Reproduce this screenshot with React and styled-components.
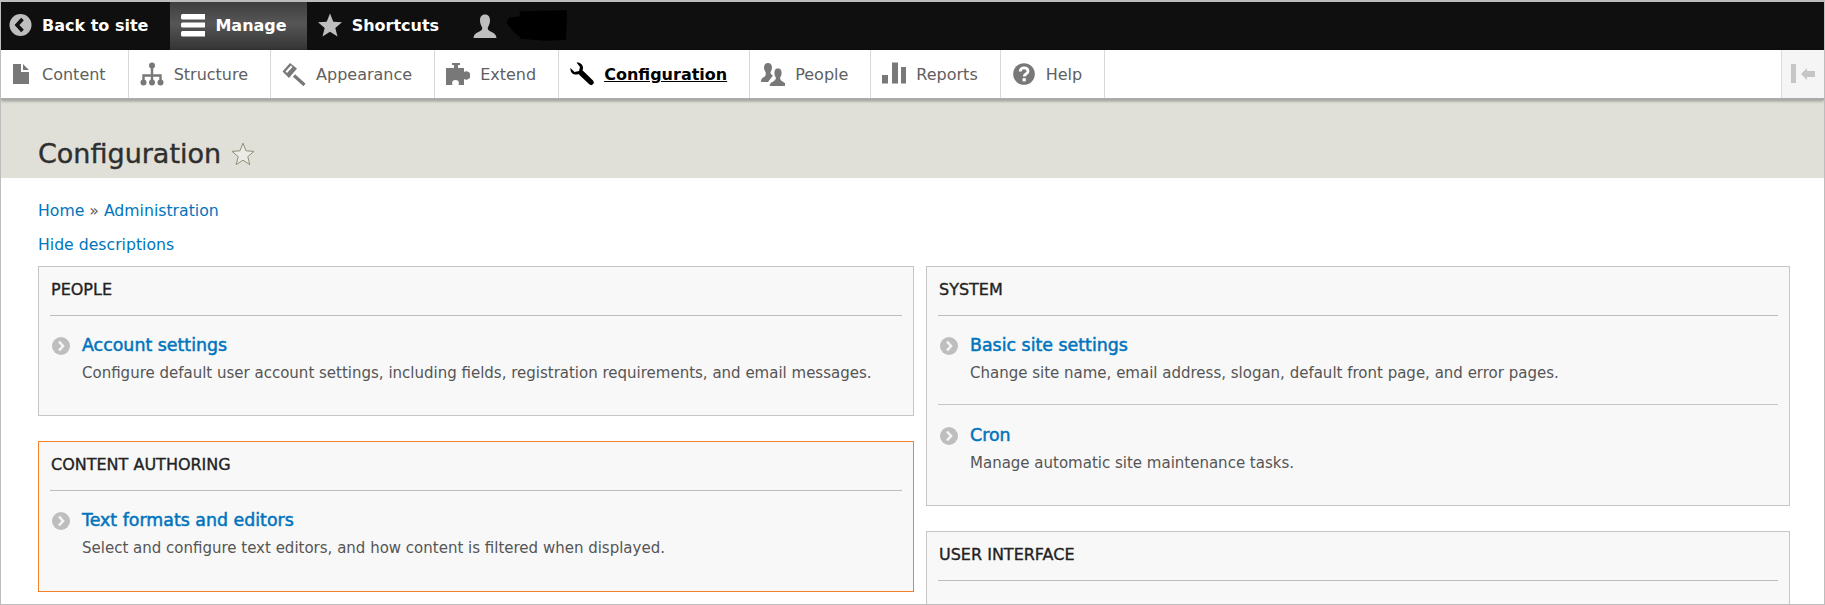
import React from "react";
import styled, { createGlobalStyle } from "styled-components";

const Global = createGlobalStyle`
  html, body {
    margin: 0;
    padding: 0;
    background: #fff;
  }
  * {
    box-sizing: border-box;
  }
`;

const Frame = styled.div`
  width: 1825px;
  height: 605px;
  overflow: hidden;
  border: 1px solid #bdbdbd;
  border-top-width: 2px;
  background: #fff;
  font-family: "DejaVu Sans", Verdana, sans-serif;
`;

const Toolbar = styled.div`
  display: flex;
  height: 48px;
  background: #0f0f0f;
`;

const BarItem = styled.a`
  display: flex;
  align-items: center;
  gap: 10px;
  padding: 0 ${(p) => (p.$active ? "20px" : "22px")} 2px ${(p) => (p.$first ? "7px" : "11px")};
  color: #fff;
  font-size: 16px;
  font-weight: bold;
  background: ${(p) => (p.$active ? "linear-gradient(#3e3e3e, #565656 45%, #343434)" : "transparent")};
`;

const UserItem = styled(BarItem)`
  margin-left: 1px;
  padding-right: 0;
  padding-bottom: 0;
`;

const Tray = styled.div`
  position: relative;
  display: flex;
  height: 50px;
  background: #fff;
  border-bottom: 2px solid #ababab;
  box-shadow: 0 1px 3px rgba(0, 0, 0, 0.35);
`;

const Tab = styled.a`
  display: flex;
  align-items: center;
  gap: 10px;
  padding: 0 22px 0 ${(p) => (p.$first ? "7px" : "11px")};
  border-right: 1px solid #d9d9d9;
  color: ${(p) => (p.$active ? "#000" : "#606060")};
  font-size: 16px;
  font-weight: ${(p) => (p.$active ? "bold" : "normal")};
  text-decoration: ${(p) => (p.$active ? "underline" : "none")};
`;

const TabLabel = styled.span`
  padding-top: 1px;
`;

const Toggle = styled.button`
  display: flex;
  align-items: center;
  justify-content: center;
  width: 43px;
  margin-left: auto;
  padding: 0;
  border: 0;
  border-left: 1px solid #d9d9d9;
  background: #f5f5f5;
`;

const PageHead = styled.div`
  display: flex;
  align-items: center;
  gap: 10px;
  height: 78px;
  padding: 38px 0 8px 37px;
  background: #e0e0d8;
`;

const Title = styled.h1`
  margin: 0;
  color: #2f2f2f;
  font-size: 27px;
  line-height: 30px;
  font-weight: normal;
  -webkit-text-stroke: 0.4px #2f2f2f;
`;

const Main = styled.div`
  padding: 23px 35px 0 37px;
`;

const Breadcrumb = styled.div`
  color: #555;
  font-size: 15.7px;
  line-height: 20px;
`;

const TextLink = styled.a`
  color: #0074bd;
`;

const HideLine = styled.div`
  margin-top: 14px;
  font-size: 15.7px;
  line-height: 20px;
`;

const Columns = styled.div`
  display: grid;
  grid-template-columns: 876px 864px;
  gap: 12px;
  margin-top: 11px;
`;

const Column = styled.div`
  display: flex;
  flex-direction: column;
  gap: 25px;
`;

const Panel = styled.section`
  padding: 0 11px ${(p) => p.$bottom || 0}px;
  background: #f8f8f8;
  border: 1px solid ${(p) => (p.$highlight ? "#f5822a" : "#c6c6c6")};
`;

const PanelTitle = styled.h3`
  margin: 0;
  height: 49px;
  padding: 13px 0 0 1px;
  border-bottom: 1px solid #bdbdbd;
  color: #222;
  font-size: 16px;
  line-height: 20px;
  font-weight: normal;
  -webkit-text-stroke: 0.35px #222;
`;

const Item = styled.div`
  display: grid;
  grid-template-columns: 18px 1fr;
  column-gap: 12px;
  padding: 19px 0 21px 2px;
  & + & {
    padding: 20px 0 20px 2px;
    border-top: 1px solid #c6c6c6;
  }
`;

const ItemIcon = styled.svg`
  width: 18px;
  height: 18px;
  margin-top: 2px;
`;

const ItemLink = styled.a`
  color: #0074bd;
  font-size: 17.4px;
  line-height: 20px;
  -webkit-text-stroke: 0.5px #0074bd;
`;

const ItemDesc = styled.div`
  grid-column: 2;
  margin-top: 8px;
  color: #555;
  font-size: 15px;
  line-height: 20px;
`;

const Icon = ({ color = "#787878", children, ...rest }) => (
  <svg width="24" height="24" viewBox="0 0 24 24" fill={color} {...rest}>
    {children}
  </svg>
);

const BackIcon = () => (
  <Icon color="#bebebe">
    <circle cx="12.5" cy="12" r="11" />
    <path d="M14.5 6 L9 12 L14.5 18" fill="none" stroke="#111" strokeWidth="3.6" />
  </Icon>
);

const MenuIcon = () => (
  <Icon color="#fff">
    <rect x="0" y="1" width="25" height="5.5" rx="1.5" />
    <rect x="0" y="9.5" width="25" height="5" rx="1.5" />
    <rect x="0" y="18" width="25" height="5.5" rx="1.5" />
  </Icon>
);

const StarIcon = () => (
  <Icon color="#bebebe">
    <path d="M12 0.5 L15.3 8.7 L24 9.3 L17.3 15 L19.5 23.5 L12 18.8 L4.5 23.5 L6.7 15 L0 9.3 L8.7 8.7 Z" />
  </Icon>
);

const UserIcon = () => (
  <Icon color="#bebebe">
    <path d="M12 0.5 C15.5 0.5 17 3 17 6.5 C17 9.5 15.6 12 14.8 13.5 C14.5 15.5 15.5 16.5 18 17.7 C21 19 23 20 23.5 24 L0.5 24 C1 20 3 19 6 17.7 C8.5 16.5 9.5 15.5 9.2 13.5 C8.4 12 7 9.5 7 6.5 C7 3 8.5 0.5 12 0.5 Z" />
  </Icon>
);

const Scribble = () => (
  <svg width="60" height="32" viewBox="0 0 61 32" fill="#000">
    <path d="M13 1 L61 0 L60 30 L40 31 L13 29 L13 27 L7 22 L0 14 C0 9 3 6 7 7 L13 6 Z" />
  </svg>
);

const FileIcon = () => (
  <Icon>
    <path d="M5 2 H13 V10 H21 V22 H5 Z M15 2 L21 8 H15 Z" />
  </Icon>
);

const TreeIcon = () => (
  <Icon>
    <path d="M12 3 V21 M3.5 21 V13.5 H20.5 V21" fill="none" stroke="#787878" strokeWidth="2.4" />
    <circle cx="12" cy="3.5" r="3" />
    <circle cx="3.5" cy="20.5" r="3" />
    <circle cx="12" cy="20.5" r="3" />
    <circle cx="20.5" cy="20.5" r="3" />
  </Icon>
);

const BrushIcon = () => (
  <Icon>
    <path d="M0.5 9.5 L8 1 L15 6.5 L7 16 Z" />
    <path d="M3.5 9.5 L9 3.5 L10.5 5 L5 11 Z" fill="#fff" />
    <path d="M12 13.5 L22.5 23" fill="none" stroke="#787878" strokeWidth="3.2" />
  </Icon>
);

const PuzzleIcon = () => (
  <Icon>
    <path d="M6 1 H14 V3 H12 V6 H18 V10 C20 8.5 24.5 9.5 24.5 13.5 C24.5 17.5 20 18.5 18 17 V23 H12.5 C13.5 20 12.5 18 9.5 18 C6.5 18 5.5 20 6.5 23 H0 V6 H8 V3 H6 Z" />
  </Icon>
);

const WrenchIcon = () => (
  <Icon color="#000">
    <path d="M6.5 0.5 C10 0 13 2.5 13 6 C13 7 12.8 7.6 12.5 8.3 L23 18.5 C24.1 19.6 24.1 21.2 23 22.3 C21.9 23.4 20.3 23.4 19.2 22.3 L8.4 12 C7.6 12.4 7 12.5 6 12.5 C2.5 12.5 0 9.5 0.5 6 L4.5 10 L9 9 L10 5 Z" />
  </Icon>
);

const PeopleIcon = () => (
  <Icon>
    <path d="M7 1 C9.5 1 11 3 11 5.5 C11 7.5 10 9 9.5 10.5 C9.5 12 10.5 13 12 13.5 L7 20 H0 C0 17 1 16 3 15 C4.5 14 5 13 4.7 10.5 C4 9 3 7.5 3 5.5 C3 3 4.5 1 7 1 Z" />
    <path d="M17 6 C20 6 21 8.5 21 11 C21 13 20 14.5 19.5 16 C19.5 18 21 19 23 20 C24.5 21 25 22 25.5 25 H8 C8.5 22 9 21 10.5 20 C12.5 19 14.5 18 14.5 16 C14 14.5 13 13 13 11 C13 8.5 14 6 17 6 Z" stroke="#fff" strokeWidth="0.8" />
  </Icon>
);

const BarsIcon = () => (
  <Icon>
    <rect x="0" y="13" width="6" height="8.5" />
    <rect x="10" y="0.5" width="6" height="21" />
    <rect x="19" y="5" width="6" height="16.5" />
  </Icon>
);

const HelpIcon = () => (
  <Icon>
    <circle cx="12" cy="12" r="10.8" />
    <path d="M8.2 9.5 C8.2 7 10 5.8 12 5.8 C14.2 5.8 16 7 16 9.2 C16 11.8 12.2 12 12.2 14.6" fill="none" stroke="#fff" strokeWidth="2.8" />
    <rect x="10.6" y="16.2" width="3.2" height="3.2" fill="#fff" />
  </Icon>
);

const CollapseIcon = () => (
  <svg width="24" height="20" viewBox="0 0 24 20" fill="#c6c6c6">
    <rect x="0" y="0" width="5" height="19" />
    <path d="M10 10 L16 4 V7 H24 V13 H16 V16 Z" />
  </svg>
);

const OutlineStar = () => (
  <svg width="24" height="24" viewBox="0 0 24 24" fill="#ecece6" stroke="#8f8f78" strokeWidth="1">
    <path d="M12 1.2 L15 8.8 L23 9.4 L16.8 14.6 L18.8 22.6 L12 18.2 L5.2 22.6 L7.2 14.6 L1 9.4 L9 8.8 Z" />
  </svg>
);

const Chevron = () => (
  <ItemIcon viewBox="0 0 18 18">
    <circle cx="9" cy="9" r="9" fill="#bebebe" />
    <path d="M7 4.5 L11 9 L7 13.5" fill="none" stroke="#f4f4f4" strokeWidth="2.6" />
  </ItemIcon>
);

const tabs = [
  { label: "Content", icon: <FileIcon />, first: true },
  { label: "Structure", icon: <TreeIcon /> },
  { label: "Appearance", icon: <BrushIcon /> },
  { label: "Extend", icon: <PuzzleIcon /> },
  { label: "Configuration", icon: <WrenchIcon />, active: true },
  { label: "People", icon: <PeopleIcon /> },
  { label: "Reports", icon: <BarsIcon /> },
  { label: "Help", icon: <HelpIcon /> },
];

const ConfigItem = ({ title, desc }) => (
  <Item>
    <Chevron />
    <ItemLink>{title}</ItemLink>
    <ItemDesc>{desc}</ItemDesc>
  </Item>
);

export default function App() {
  return (
    <Frame>
      <Global />
      <Toolbar>
        <BarItem $first>
          <BackIcon />
          Back to site
        </BarItem>
        <BarItem $active>
          <MenuIcon />
          Manage
        </BarItem>
        <BarItem>
          <StarIcon />
          Shortcuts
        </BarItem>
        <UserItem>
          <UserIcon />
          <Scribble />
        </UserItem>
      </Toolbar>
      <Tray>
        {tabs.map((t) => (
          <Tab key={t.label} $first={t.first} $active={t.active}>
            {t.icon}
            <TabLabel>{t.label}</TabLabel>
          </Tab>
        ))}
        <Toggle>
          <CollapseIcon />
        </Toggle>
      </Tray>
      <PageHead>
        <Title>Configuration</Title>
        <OutlineStar />
      </PageHead>
      <Main>
        <Breadcrumb>
          <TextLink>Home</TextLink> » <TextLink>Administration</TextLink>
        </Breadcrumb>
        <HideLine>
          <TextLink>Hide descriptions</TextLink>
        </HideLine>
        <Columns>
          <Column>
            <Panel $bottom={11}>
              <PanelTitle>PEOPLE</PanelTitle>
              <ConfigItem
                title="Account settings"
                desc="Configure default user account settings, including fields, registration requirements, and email messages."
              />
            </Panel>
            <Panel $highlight $bottom={12}>
              <PanelTitle>CONTENT AUTHORING</PanelTitle>
              <ConfigItem
                title="Text formats and editors"
                desc="Select and configure text editors, and how content is filtered when displayed."
              />
            </Panel>
          </Column>
          <Column>
            <Panel $bottom={12}>
              <PanelTitle>SYSTEM</PanelTitle>
              <ConfigItem
                title="Basic site settings"
                desc="Change site name, email address, slogan, default front page, and error pages."
              />
              <ConfigItem title="Cron" desc="Manage automatic site maintenance tasks." />
            </Panel>
            <Panel $bottom={60}>
              <PanelTitle>USER INTERFACE</PanelTitle>
            </Panel>
          </Column>
        </Columns>
      </Main>
    </Frame>
  );
}
